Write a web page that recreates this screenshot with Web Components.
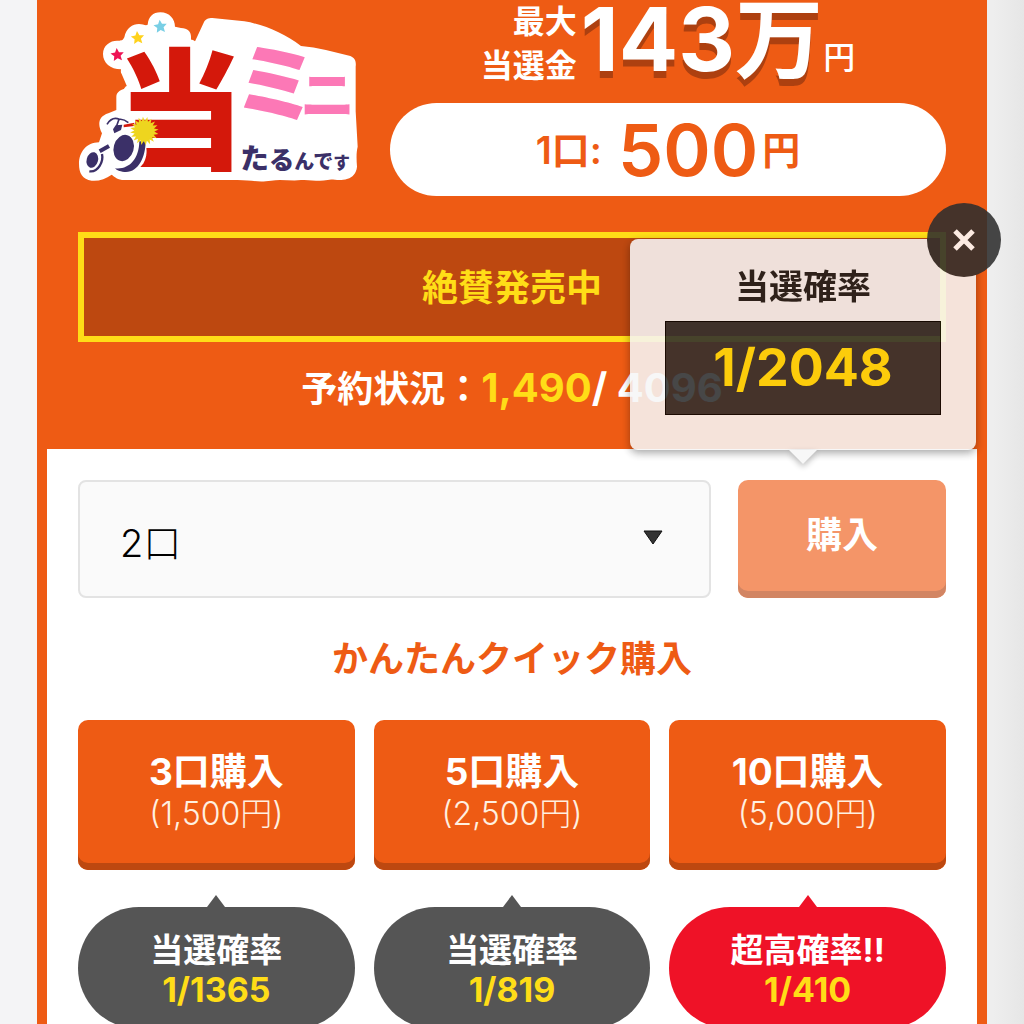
<!DOCTYPE html>
<html lang="ja">
<head>
<meta charset="utf-8">
<meta name="viewport" content="width=device-width, initial-scale=1">
<title>当ミニ たるんです</title>
<style>
  body {
    margin: 0;
    font-family: Inter, "Noto Sans CJK JP", sans-serif;
    font-weight: 700;
    color: #fff;
    background: linear-gradient(to right, #f4f4f6 50%, #eee 50%, #eee 97%, #e6e6e6);
    --orange: #ee5b14;
    --orange-dark: #bd4810;
    --yellow: #ffdd17;
  }
</style>
</head>
<body>
<lottery-card>
  <lottery-logo slot="logo"></lottery-logo>
  <prize-amount slot="summary" amount="143万"></prize-amount>
  <unit-price slot="summary" price="500"></unit-price>
  <sale-status slot="status" sold="1,490" total="4096">絶賛発売中</sale-status>
  <buy-form>
    <odds-tooltip slot="tooltip" odds="1/2048">当選確率</odds-tooltip>
  </buy-form>
  <quick-buy>
    <span slot="title">かんたんクイック購入</span>
    <quick-option count="3" price="1,500" odds="1/1365">当選確率</quick-option>
    <quick-option count="5" price="2,500" odds="1/819">当選確率</quick-option>
    <quick-option count="10" price="5,000" odds="1/410" hot>超高確率!!</quick-option>
  </quick-buy>
</lottery-card>

<script>
function attach(element, html) {
  const template = document.createElement('template');
  template.innerHTML = html;
  const root = element.attachShadow({ mode: 'open' });
  root.appendChild(template.content.cloneNode(true));
  return root;
}

class LotteryCard extends HTMLElement {
  constructor() {
    super();
    attach(this, `
      <style>
        :host {
          display: block;
          margin: 0 37px;
          background: var(--orange);
        }
        header {
          display: flex;
          flex-direction: column;
          padding: 0 41px 37px;
        }
        .top {
          display: grid;
          grid-template-columns: 280px 1fr;
          gap: 32px;
          margin-bottom: 36px;
        }
        .logo {
          padding-top: 11px;
        }
        main {
          display: block;
          margin: 0 10px;
          padding: 31px;
          background: #fff;
        }
      </style>
      <header>
        <div class="top">
          <div class="logo"><slot name="logo"></slot></div>
          <div><slot name="summary"></slot></div>
        </div>
        <slot name="status"></slot>
      </header>
      <main><slot></slot></main>
    `);
  }
}

class LotteryLogo extends HTMLElement {
  constructor() {
    super();
    attach(this, `
      <style>
        :host { display: block; }
        svg { display: block; width: 100%; overflow: visible; }
        text { font-family: "Noto Sans CJK JP", sans-serif; font-weight: 900; }
        .main {
          fill: #d4180b;
          stroke: #fff;
          stroke-width: 44px;
          stroke-linejoin: round;
          paint-order: stroke;
        }
      </style>
      <svg viewBox="21 33 840 513" role="img" aria-label="当ミニ たるんです">
        <path fill="#fff" d="M24 492C24 456 46 428 84 427L93 400C80 376 80 350 112 340L136 330V290C136 276 150 268 170 264L152 222C148 216 150 212 150 208C118 208 96 188 96 162C96 136 118 122 138 122C150 122 154 124 160 112C166 84 184 72 204 72C216 72 224 78 230 74C232 50 246 37 268 37C296 37 312 58 312 80L330 84C350 84 360 96 360 110V150L398 68C402 58 412 54 424 54L520 64C580 74 640 100 690 138C740 142 790 156 838 168C852 174 856 184 854 200V334L860 440C856 456 856 474 858 500C856 520 844 532 830 536C800 546 786 534 770 540C740 546 720 538 690 540C660 544 630 536 600 542C560 548 540 540 500 540H160C140 540 130 530 122 524C104 536 84 544 62 542C34 538 24 520 24 492Z"/>
        <text class="main" x="130" y="478" font-size="392">当</text>
        <text x="486" y="346" font-size="256" fill="#fc78b6">ミ</text>
        <text x="688" y="344" font-size="164" fill="#fc78b6">ニ</text>
        <text y="506" fill="#3b3068"><tspan x="508" font-size="86">た</tspan><tspan font-size="76">る</tspan><tspan font-size="60">んで</tspan><tspan font-size="50">す</tspan></text>
        <g id="bike">
          <path fill="#fff" d="M124 500C108 440 130 388 184 396C218 408 236 440 222 480C210 510 180 524 140 520Z"/>
          <path fill="#3b3068" d="M205 424H224C224 470 202 520 160 516C144 514 136 510 132 505C172 510 204 480 205 424Z"/>
          <ellipse cx="158" cy="444" rx="30" ry="40" transform="rotate(16 158 444)" fill="#3b3068"/>
          <ellipse cx="64" cy="480" rx="17" ry="24" transform="rotate(16 64 480)" fill="#3b3068"/>
          <path fill="none" stroke="#3b3068" stroke-width="7" d="M55 514C82 518 98 484 93 462"/>
          <path fill="none" stroke="#3b3068" stroke-width="12" d="M86 454L114 438"/>
          <path fill="none" stroke="#3b3068" stroke-width="5" d="M108 373Q124 348 145 358Q158 356 172 368M144 358L136 380"/>
          <path fill="#3b3068" d="M134 376L154 374L150 390L130 400L126 388Z"/>
          <path fill="#d4180b" d="M158 374L190 368V378L158 382Z"/>
        </g>
        <path id="sun" fill="#eed51f"/>
        <path class="star" data-at="139,165" fill="#ee1355"/>
        <path class="star" data-at="200,114" fill="#ffd21c"/>
        <path class="star" data-at="268,80" fill="#79cfe5"/>
      </svg>
    `);
    this.shadowRoot.getElementById('sun').setAttribute('d', this.burst(220, 393, 20, 43, 30));
    this.shadowRoot.querySelectorAll('.star').forEach((star) => {
      const [x, y] = star.dataset.at.split(',').map(Number);
      star.setAttribute('d', this.burst(x, y, 5, 21, 10));
    });
  }

  // spiky outline with alternating outer and inner radius
  burst(cx, cy, points, outer, inner) {
    let d = '';
    for (let i = 0; i < points * 2; i += 1) {
      const radius = i % 2 ? inner : outer;
      const angle = Math.PI * i / points - Math.PI / 2 - 0.1;
      d += `${i ? 'L' : 'M'}${(cx + radius * Math.cos(angle)).toFixed(1)} ${(cy + radius * Math.sin(angle)).toFixed(1)}`;
    }
    return `${d}Z`;
  }
}

class PrizeAmount extends HTMLElement {
  constructor() {
    super();
    attach(this, `
      <style>
        :host {
          display: flex;
          justify-content: center;
          height: 103px;
        }
        .label {
          font-size: 32px;
          line-height: 44px;
          text-align: right;
        }
        .amount {
          margin-left: 4px;
          font-size: 88px;
          line-height: 78px;
          text-shadow: 0 7px 0 #ad4010;
        }
        .yen {
          padding-top: 36px;
          font-size: 32px;
          line-height: 44px;
          font-weight: 500;
        }
      </style>
      <div class="label">最大<br>当選金</div>
      <div class="amount"></div>
      <div class="yen">円</div>
    `);
  }

  connectedCallback() {
    this.shadowRoot.querySelector('.amount').textContent = this.getAttribute('amount');
  }
}

class UnitPrice extends HTMLElement {
  constructor() {
    super();
    attach(this, `
      <style>
        :host {
          display: flex;
          justify-content: center;
          align-items: center;
          gap: 16px;
          height: 93px;
          border-radius: 48px;
          background: #fff;
          color: var(--orange);
          font-size: 38px;
          line-height: 48px;
          font-weight: 600;
        }
        .price {
          display: flex;
          align-items: center;
          gap: 4px;
        }
        strong { font-size: 72px; font-weight: 600; }
      </style>
      <span>1口:</span>
      <span class="price"><strong></strong>円</span>
    `);
  }

  connectedCallback() {
    this.shadowRoot.querySelector('strong').textContent = this.getAttribute('price');
  }
}

class SaleStatus extends HTMLElement {
  constructor() {
    super();
    attach(this, `
      <style>
        :host {
          display: block;
          text-align: center;
          font-size: 36px;
          line-height: 48px;
        }
        .banner {
          padding: 26px 0 24px;
          border: 6px solid var(--yellow);
          background: var(--orange-dark);
          color: var(--yellow);
        }
        .count {
          height: 48px;
          margin-top: 22px;
        }
        .number { font-size: 40px; }
        .sold { color: var(--yellow); }
      </style>
      <div class="banner"><slot></slot></div>
      <div class="count">予約状況：<span class="number"><span class="sold"></span>/ <span class="total"></span></span></div>
    `);
  }

  connectedCallback() {
    this.shadowRoot.querySelector('.sold').textContent = this.getAttribute('sold');
    this.shadowRoot.querySelector('.total').textContent = this.getAttribute('total');
  }
}

class BuyForm extends HTMLElement {
  constructor() {
    super();
    attach(this, `
      <style>
        :host {
          display: grid;
          grid-template-columns: 1fr 208px;
          gap: 27px;
        }
        .field {
          display: grid;
          align-items: center;
        }
        select, svg { grid-area: 1 / 1; }
        select {
          appearance: none;
          width: 100%;
          height: 118px;
          padding: 8px 40px 0;
          border: 2px solid #e3e3e3;
          border-radius: 8px;
          background: #fafafa;
          color: #000;
          font: 300 38px Inter, "Noto Sans CJK JP", sans-serif;
        }
        svg {
          justify-self: end;
          width: 20px;
          margin: 0 48px 4px 0;
          pointer-events: none;
        }
        .buy { position: relative; }
        button {
          width: 100%;
          height: 118px;
          padding: 0 0 14px;
          border: 0;
          border-radius: 10px;
          background: #f49568;
          box-shadow: inset 0 -7px 0 #d28563;
          color: #fff;
          font: inherit;
          font-size: 36px;
        }
        /* floats over the header, above the button */
        ::slotted(odds-tooltip) {
          position: absolute;
          right: -30px;
          bottom: calc(100% + 30px);
        }
      </style>
      <div class="field">
        <select aria-label="口数">
          <option>1口</option>
          <option selected>2口</option>
          <option>3口</option>
        </select>
        <svg viewBox="0 0 20 15" aria-hidden="true"><path d="M1 1H19L10 14Z" fill="#333" stroke="#111"/></svg>
      </div>
      <div class="buy">
        <button type="button">購入</button>
        <slot name="tooltip"></slot>
      </div>
    `);
  }
}

class OddsTooltip extends HTMLElement {
  constructor() {
    super();
    attach(this, `
      <style>
        :host {
          display: block;
          box-sizing: border-box;
          width: 346px;
          padding: 24px 35px 35px;
          border-radius: 8px;
          background: #f6f6f6;
          color: #1c1c1c;
          text-align: center;
          opacity: 0.88;
          box-shadow: 0 3px 8px rgba(0, 0, 0, 0.4);
        }
        .label {
          margin-bottom: 10px;
          font-size: 34px;
          line-height: 48px;
        }
        .odds {
          border: 1px solid #000;
          background: #2e2e2e;
          color: #ffdc0a;
          font-size: 52px;
          line-height: 92px;
        }
        .arrow {
          position: absolute;
          top: 100%;
          left: 50%;
          margin-left: -14px;
          border: 14px solid transparent;
          border-top-color: #f6f6f6;
          border-bottom: 0;
          filter: drop-shadow(0 3px 3px rgba(0, 0, 0, 0.3));
        }
        button {
          position: absolute;
          top: -36px;
          right: -25px;
          width: 74px;
          height: 74px;
          padding: 0;
          border: 0;
          border-radius: 50%;
          background: #2e2e2e;
        }
        svg { display: block; width: 22px; margin: 0 auto; }
      </style>
      <div class="label"><slot></slot></div>
      <div class="odds"></div>
      <div class="arrow"></div>
      <button type="button" aria-label="閉じる">
        <svg viewBox="0 0 22 22"><path d="M2 2L20 20M20 2L2 20" stroke="#fff" stroke-width="5"/></svg>
      </button>
    `);
  }

  connectedCallback() {
    this.shadowRoot.querySelector('.odds').textContent = this.getAttribute('odds');
    this.shadowRoot.querySelector('button').addEventListener('click', () => this.remove());
  }
}

class QuickBuy extends HTMLElement {
  constructor() {
    super();
    attach(this, `
      <style>
        :host { display: block; }
        h2 {
          margin: 36px 0;
          color: var(--orange);
          font-size: 36px;
          line-height: 50px;
          font-weight: 600;
          text-align: center;
        }
        .options {
          display: grid;
          grid-template-columns: repeat(3, 1fr);
          gap: 19px;
        }
      </style>
      <h2><slot name="title"></slot></h2>
      <div class="options"><slot></slot></div>
    `);
  }
}

class QuickOption extends HTMLElement {
  constructor() {
    super();
    attach(this, `
      <style>
        :host {
          display: flex;
          flex-direction: column;
          --tip: #555;
        }
        :host([hot]) { --tip: #ef1227; }
        button {
          display: flex;
          flex-direction: column;
          align-items: center;
          height: 150px;
          padding: 31px 0 0;
          border: 0;
          border-radius: 10px;
          background: var(--orange);
          box-shadow: inset 0 -7px 0 var(--orange-dark);
          color: #fff;
          font: inherit;
          font-size: 37px;
          line-height: 42px;
        }
        .price {
          color: #fff0e0;
          font-size: 32px;
          font-weight: 300;
        }
        .arrow {
          align-self: center;
          margin-top: 25px;
          border: 9px solid transparent;
          border-top: 0;
          border-bottom: 12px solid var(--tip);
        }
        .tip {
          padding: 23px 0 19px;
          border-radius: 62px;
          background: var(--tip);
          font-size: 33px;
          line-height: 40px;
          text-align: center;
        }
        .odds {
          color: var(--yellow);
          font-size: 34px;
        }
      </style>
      <button type="button">
        <span class="count"></span>
        <span class="price"></span>
      </button>
      <div class="arrow"></div>
      <div class="tip">
        <slot></slot>
        <div class="odds"></div>
      </div>
    `);
  }

  connectedCallback() {
    const root = this.shadowRoot;
    root.querySelector('.count').textContent = `${this.getAttribute('count')}口購入`;
    root.querySelector('.price').textContent = `(${this.getAttribute('price')}円)`;
    root.querySelector('.odds').textContent = this.getAttribute('odds');
  }
}

customElements.define('lottery-logo', LotteryLogo);
customElements.define('prize-amount', PrizeAmount);
customElements.define('unit-price', UnitPrice);
customElements.define('sale-status', SaleStatus);
customElements.define('odds-tooltip', OddsTooltip);
customElements.define('buy-form', BuyForm);
customElements.define('quick-option', QuickOption);
customElements.define('quick-buy', QuickBuy);
customElements.define('lottery-card', LotteryCard);
</script>
</body>
</html>
